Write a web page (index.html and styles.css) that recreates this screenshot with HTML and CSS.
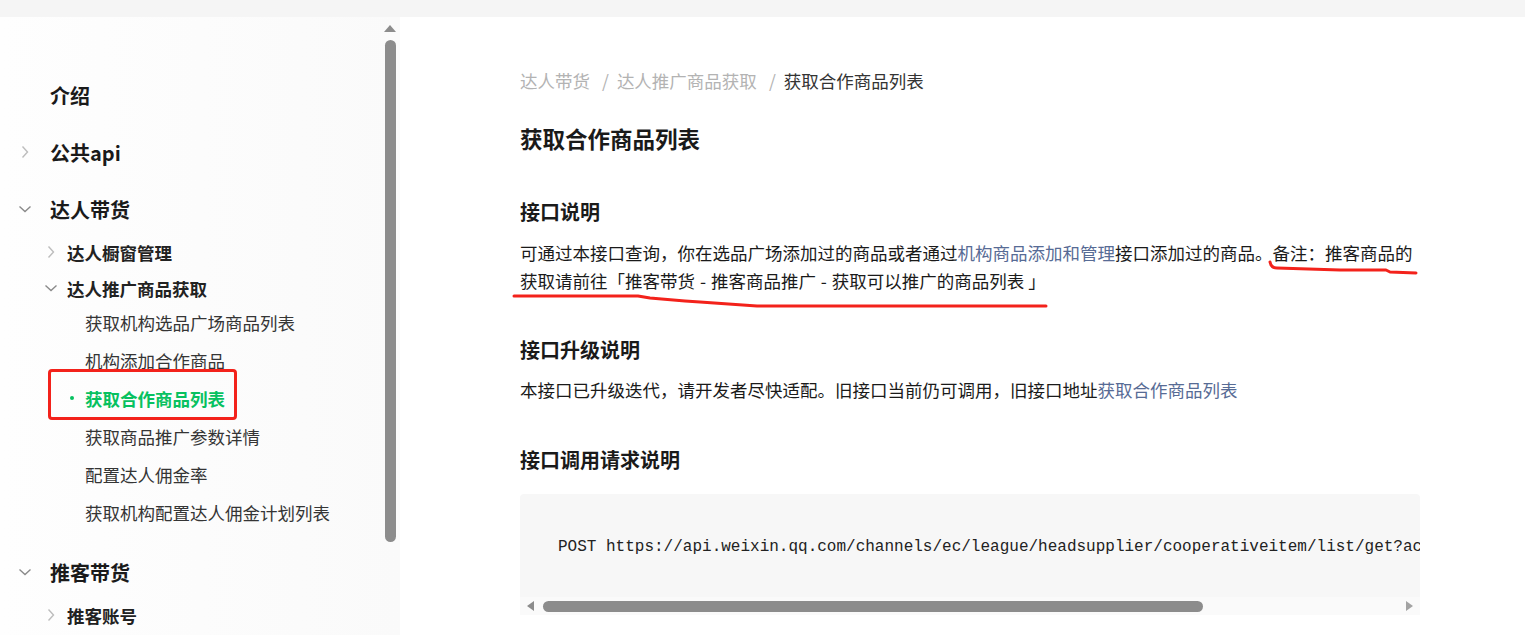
FILE: index.html
```html
<!DOCTYPE html>
<html lang="zh-CN">
<head>
<meta charset="utf-8">
<title>获取合作商品列表</title>
<link rel="stylesheet" href="styles.css">
</head>
<body>
<div class="topbar"></div>
<div class="layout">
  <aside class="sidebar">
    <nav class="menu">
      <div class="section">
        <div class="l1"><span class="chev"></span><span>介绍</span></div>
      </div>
      <div class="section">
        <div class="l1"><span class="chev"><svg width="8" height="14" viewBox="0 0 8 14"><path d="M1.5 1.5 L6.5 7 L1.5 12.5" class="chev-r"/></svg></span><span>公共api</span></div>
      </div>
      <div class="section section-open">
        <div class="l1"><span class="chev"><svg width="14" height="8" viewBox="0 0 14 8"><path d="M1.5 1.5 L7 6.5 L12.5 1.5" class="chev-d"/></svg></span><span>达人带货</span></div>
        <div class="children">
          <div class="l2"><span class="chev2"><svg width="8" height="14" viewBox="0 0 8 14"><path d="M1.5 1.5 L6.5 7 L1.5 12.5" class="chev-r"/></svg></span><span>达人橱窗管理</span></div>
          <div class="l2"><span class="chev2"><svg width="14" height="8" viewBox="0 0 14 8"><path d="M1.5 1.5 L7 6.5 L12.5 1.5" class="chev-d"/></svg></span><span>达人推广商品获取</span></div>
          <ul class="leaves">
            <li class="leaf">获取机构选品广场商品列表</li>
            <li class="leaf">机构添加合作商品</li>
            <li class="leaf active"><span class="dot"></span><span>获取合作商品列表</span><span class="mark-box"></span></li>
            <li class="leaf">获取商品推广参数详情</li>
            <li class="leaf">配置达人佣金率</li>
            <li class="leaf">获取机构配置达人佣金计划列表</li>
          </ul>
        </div>
      </div>
      <div class="section">
        <div class="l1"><span class="chev"><svg width="14" height="8" viewBox="0 0 14 8"><path d="M1.5 1.5 L7 6.5 L12.5 1.5" class="chev-d"/></svg></span><span>推客带货</span></div>
        <div class="children">
          <div class="l2"><span class="chev2"><svg width="8" height="14" viewBox="0 0 8 14"><path d="M1.5 1.5 L6.5 7 L1.5 12.5" class="chev-r"/></svg></span><span>推客账号</span></div>
        </div>
      </div>
    </nav>
    <div class="vscroll"><span class="vs-up"></span><span class="vs-thumb"></span></div>
  </aside>
  <main class="main">
    <article class="doc">
      <div class="crumbs"><span class="crumb">达人带货</span><span class="sep">/</span><span class="crumb">达人推广商品获取</span><span class="sep">/</span><span class="crumb current">获取合作商品列表</span></div>
      <h1 class="title">获取合作商品列表</h1>
      <h2 class="sub">接口说明</h2>
      <p class="para">可通过本接口查询，你在选品广场添加过的商品或者通过<a class="link">机构商品添加和管理</a>接口添加过的商品。备注：推客商品的获取请前往「推客带货<span class="dash"> - </span>推客商品推广<span class="dash"> - </span>获取可以推广的商品列表 」</p>
      <h2 class="sub sub-2">接口升级说明</h2>
      <p class="para para-2">本接口已升级迭代，请开发者尽快适配。旧接口当前仍可调用，旧接口地址<a class="link">获取合作商品列表</a></p>
      <h2 class="sub sub-3">接口调用请求说明</h2>
      <div class="code-block">
        <pre class="code">POST https://api.weixin.qq.com/channels/ec/league/headsupplier/cooperativeitem/list/get?access_token=ACCESS_TOKEN</pre>
        <div class="hscroll"><span class="hs-left"></span><span class="hs-thumb"></span><span class="hs-right"></span></div>
      </div>
    </article>
    <svg class="marks" width="1125" height="618" viewBox="0 0 1125 618">
      <path d="M870 245 Q871 251 877 251 L940 253 L986 253 L990 255 L1016 256" />
      <path d="M114 279 L238 279 L250 281 L285 284 L300 285 L357 289 L646 289" />
    </svg>
  </main>
</div>
</body>
</html>
```

FILE: styles.css
```css
* { box-sizing: border-box; }

html, body {
  margin: 0;
  padding: 0;
}

body {
  width: 1525px;
  height: 635px;
  overflow: hidden;
  background: #ffffff;
  font-family: "Noto Sans CJK SC", "Noto Sans", sans-serif;
  color: #1a1a1a;
}

.topbar {
  height: 17px;
  background: #f5f5f5;
}

.layout {
  display: flex;
  height: 618px;
}

/* ---------- sidebar ---------- */
.sidebar {
  width: 400px;
  flex: none;
  display: flex;
  background: linear-gradient(to right, #fefefe, #fafafa);
  overflow: hidden;
}

.menu {
  flex: 1;
  padding-top: 58px;
}

.section { margin-bottom: 17px; }
.section-open { margin-bottom: 21px; }

.l1 {
  height: 40px;
  display: flex;
  align-items: center;
  padding-left: 18px;
  font-size: 20px;
  font-weight: 700;
  color: #1a1a1a;
}

.chev {
  width: 14px;
  margin-right: 18px;
  display: flex;
  align-items: center;
  justify-content: center;
}

.chev-r {
  fill: none;
  stroke: #bdbdbd;
  stroke-width: 1.4;
}

.chev-d {
  fill: none;
  stroke: #8a8a8a;
  stroke-width: 1.4;
}

.children { margin-top: 5px; }

.l2 {
  height: 36px;
  display: flex;
  align-items: center;
  padding-left: 44px;
  font-size: 17.5px;
  font-weight: 700;
  color: #222;
}

.chev2 {
  width: 14px;
  margin-right: 9px;
  display: flex;
  align-items: center;
  justify-content: center;
}

.leaves {
  list-style: none;
  margin: -3px 0 0 0;
  padding: 0;
}

.leaf {
  height: 38px;
  display: flex;
  align-items: center;
  padding-left: 85px;
  font-size: 17.5px;
  color: #353535;
  white-space: nowrap;
}

.leaf.active {
  position: relative;
  padding-left: 70px;
  color: #07c160;
  font-weight: 700;
}

.dot {
  width: 4px;
  height: 4px;
  border-radius: 50%;
  background: #07c160;
  margin-right: 11px;
}

.mark-box {
  position: absolute;
  left: 48px;
  top: -10px;
  width: 189px;
  height: 51px;
  border: 3px solid #f3221b;
  border-radius: 4px;
}

.vscroll {
  width: 14px;
  margin-right: 3px;
  padding-top: 8px;
  display: flex;
  flex-direction: column;
  align-items: center;
}

.vs-up {
  width: 0;
  height: 0;
  border-left: 6.5px solid transparent;
  border-right: 6.5px solid transparent;
  border-bottom: 7px solid #8c8c8c;
}

.vs-thumb {
  margin-top: 8px;
  width: 11px;
  height: 502px;
  border-radius: 6px;
  background: #8c8c8c;
}

/* ---------- main ---------- */
.main {
  flex: 1;
  position: relative;
  background: #ffffff;
}

.doc {
  width: 1020px;
  padding: 50px 0 0 120px;
}

.crumbs {
  display: flex;
  font-size: 17.5px;
  line-height: 28px;
  color: #b3b3b3;
}

.sep {
  margin: 0 8px 0 12px;
}

.crumb.current { color: #333; }

.title {
  margin: 27px 0 0;
  font-size: 22.5px;
  line-height: 32px;
  font-weight: 700;
  color: #1a1a1a;
}

.sub {
  margin: 43px 0 0;
  font-size: 20px;
  line-height: 30px;
  font-weight: 700;
  color: #1a1a1a;
}

.sub-2 { margin-top: 40px; }
.sub-3 { margin-top: 41px; }

.para {
  margin: 12px 0 0;
  width: 900px;
  font-size: 17.5px;
  line-height: 28px;
  color: #1a1a1a;
}

.dash { word-spacing: 1px; }

.para-2 { margin-top: 11px; }

.link {
  color: #576b95;
  text-decoration: none;
}

.code-block {
  margin-top: 19px;
  width: 900px;
  background: #f7f7f7;
  border-radius: 4px 4px 0 0;
  overflow: hidden;
}

.code {
  margin: 0;
  padding: 41px 0 38px 38px;
  font-family: "Liberation Mono", "DejaVu Sans Mono", monospace;
  font-size: 16px;
  line-height: 24px;
  color: #222;
  white-space: pre;
  overflow: hidden;
}

.hscroll {
  height: 18px;
  background: #fafafa;
  display: flex;
  align-items: center;
}

.hs-left {
  margin-left: 7px;
  width: 0;
  height: 0;
  border-top: 5.5px solid transparent;
  border-bottom: 5.5px solid transparent;
  border-right: 7px solid #8c8c8c;
}

.hs-thumb {
  margin-left: 9px;
  width: 660px;
  height: 11px;
  border-radius: 6px;
  background: #8c8c8c;
}

.hs-right {
  margin-left: auto;
  margin-right: 7px;
  width: 0;
  height: 0;
  border-top: 5.5px solid transparent;
  border-bottom: 5.5px solid transparent;
  border-left: 7px solid #a3a3a3;
}

.marks {
  position: absolute;
  left: 0;
  top: 0;
  pointer-events: none;
}

.marks path {
  fill: none;
  stroke: #f3221b;
  stroke-width: 3;
  stroke-linecap: round;
  stroke-linejoin: round;
}
```
